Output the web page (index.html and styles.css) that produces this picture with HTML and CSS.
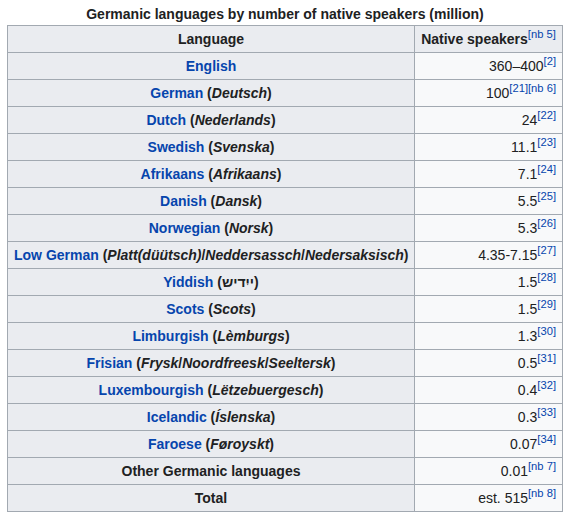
FILE: index.html
```html
<!DOCTYPE html>
<html lang="en">
<head>
<meta charset="utf-8">
<title>Germanic languages by number of native speakers</title>
<link rel="stylesheet" href="styles.css">
</head>
<body>
<table class="wikitable">
<caption>Germanic languages by number of native speakers (million)</caption>
<thead>
<tr><th class="lang">Language</th><th class="num-h">Native speakers<sup class="ref">[nb 5]</sup></th></tr>
</thead>
<tbody>
<tr><th><a>English</a></th><td>360–400<sup class="ref">[2]</sup></td></tr>
<tr><th><a>German</a> (<i>Deutsch</i>)</th><td>100<sup class="ref">[21]</sup><sup class="ref">[nb 6]</sup></td></tr>
<tr><th><a>Dutch</a> (<i>Nederlands</i>)</th><td>24<sup class="ref">[22]</sup></td></tr>
<tr><th><a>Swedish</a> (<i>Svenska</i>)</th><td>11.1<sup class="ref">[23]</sup></td></tr>
<tr><th><a>Afrikaans</a> (<i>Afrikaans</i>)</th><td>7.1<sup class="ref">[24]</sup></td></tr>
<tr><th><a>Danish</a> (<i>Dansk</i>)</th><td>5.5<sup class="ref">[25]</sup></td></tr>
<tr><th><a>Norwegian</a> (<i>Norsk</i>)</th><td>5.3<sup class="ref">[26]</sup></td></tr>
<tr><th><a>Low German</a> (<i>Platt(düütsch)</i>/<i>Neddersassch</i>/<i>Nedersaksisch</i>)</th><td>4.35-7.15<sup class="ref">[27]</sup></td></tr>
<tr><th><a>Yiddish</a> (<span lang="yi" dir="rtl">ייִדיש</span>)</th><td>1.5<sup class="ref">[28]</sup></td></tr>
<tr><th><a>Scots</a> (<i>Scots</i>)</th><td>1.5<sup class="ref">[29]</sup></td></tr>
<tr><th><a>Limburgish</a> (<i>Lèmburgs</i>)</th><td>1.3<sup class="ref">[30]</sup></td></tr>
<tr><th><a>Frisian</a> (<i>Frysk</i>/<i>Noordfreesk</i>/<i>Seeltersk</i>)</th><td>0.5<sup class="ref">[31]</sup></td></tr>
<tr><th><a>Luxembourgish</a> (<i>Lëtzebuergesch</i>)</th><td>0.4<sup class="ref">[32]</sup></td></tr>
<tr><th><a>Icelandic</a> (<i>Íslenska</i>)</th><td>0.3<sup class="ref">[33]</sup></td></tr>
<tr><th><a>Faroese</a> (<i>Føroyskt</i>)</th><td>0.07<sup class="ref">[34]</sup></td></tr>
<tr><th>Other Germanic languages</th><td>0.01<sup class="ref">[nb 7]</sup></td></tr>
<tr><th>Total</th><td>est. 515<sup class="ref">[nb 8]</sup></td></tr>
</tbody>
</table>
</body>
</html>
```
FILE: styles.css
```css
html, body {
  margin: 0;
  padding: 0;
  background: #ffffff;
}
body {
  padding: 3px 0 0 7px;
  font-family: "Liberation Sans", Arial, sans-serif;
  font-size: 14px;
  color: #202122;
}
.wikitable {
  border-collapse: collapse;
  border: 1px solid #a2a9b1;
  background: #f8f9fa;
  color: #202122;
  width: 556px;
  table-layout: fixed;
}
.wikitable caption {
  font-weight: bold;
  line-height: 22px;
  text-align: center;
}
.wikitable th,
.wikitable td {
  border: 1px solid #a2a9b1;
  padding: 3px 6px;
  line-height: 20px;
  height: 20px;
  white-space: nowrap;
}
.wikitable th {
  background: #eaecf0;
  font-weight: bold;
  text-align: center;
}
.wikitable th.lang {
  width: 394px;
}
.wikitable td {
  text-align: right;
}
.wikitable a {
  color: #0645ad;
  text-decoration: none;
}
.ref {
  font-size: 80%;
  font-weight: normal;
  line-height: 0;
  vertical-align: super;
  color: #0645ad;
}
```
